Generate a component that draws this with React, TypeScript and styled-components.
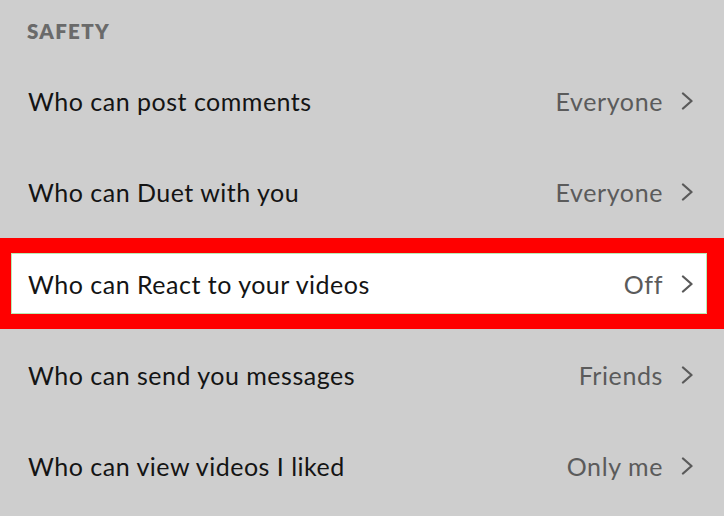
import React from 'react';
import styled, { createGlobalStyle } from 'styled-components';

const GlobalStyle = createGlobalStyle`
  html, body {
    margin: 0;
    padding: 0;
    background: #cecece;
  }
  body {
    font-family: Lato, "Noto Sans", sans-serif;
  }
`;

const Page = styled.div`
  width: 724px;
  height: 516px;
  overflow: hidden;
  background: #cecece;
`;

const SectionTitle = styled.div`
  height: 55px;
  display: flex;
  align-items: center;
  padding: 6px 0 0 27px;
  box-sizing: border-box;
  font-size: 20.5px;
  font-weight: 800;
  color: #6a6a6a;
  letter-spacing: 1.3px;
`;

const Row = styled.div`
  height: 91.5px;
  box-sizing: border-box;
  display: flex;
  align-items: center;
  padding: 0 31px 0 28px;
`;

const Highlight = styled.div`
  height: 91px;
  box-sizing: border-box;
  border-style: solid;
  border-color: #ff0000;
  border-width: 15px 17px 15px 11px;
  background: #ff0000;
`;

const HighlightInner = styled.div`
  height: 100%;
  box-sizing: border-box;
  background: #ffffff;
  border: 1px solid #b9eab3;
  display: flex;
  align-items: center;
  padding: 0 13px 0 16px;
`;

const Label = styled.span`
  flex: 1;
  font-size: 25px;
  color: #141414;
  letter-spacing: 0.5px;
`;

const Value = styled.span`
  font-size: 25px;
  color: #5b5b5b;
  letter-spacing: 0.6px;
  margin-right: 18px;
`;

const Chevron = () => (
  <svg width="12" height="18" viewBox="0 0 12 18" fill="none">
    <path d="M2 1.5 L10.5 9 L2 16.5" stroke="#5a5a5a" strokeWidth="2.3" strokeLinecap="round" strokeLinejoin="round" />
  </svg>
);

type Setting = { label: string; value: string; highlighted?: boolean };

const settings: Setting[] = [
  { label: 'Who can post comments', value: 'Everyone' },
  { label: 'Who can Duet with you', value: 'Everyone' },
  { label: 'Who can React to your videos', value: 'Off', highlighted: true },
  { label: 'Who can send you messages', value: 'Friends' },
  { label: 'Who can view videos I liked', value: 'Only me' },
];

function SettingContent({ label, value }: Setting) {
  return (
    <>
      <Label>{label}</Label>
      <Value>{value}</Value>
      <Chevron />
    </>
  );
}

export default function App() {
  return (
    <Page>
      <GlobalStyle />
      <SectionTitle>SAFETY</SectionTitle>
      {settings.map((s) =>
        s.highlighted ? (
          <Highlight key={s.label}>
            <HighlightInner>
              <SettingContent {...s} />
            </HighlightInner>
          </Highlight>
        ) : (
          <Row key={s.label}>
            <SettingContent {...s} />
          </Row>
        )
      )}
    </Page>
  );
}
